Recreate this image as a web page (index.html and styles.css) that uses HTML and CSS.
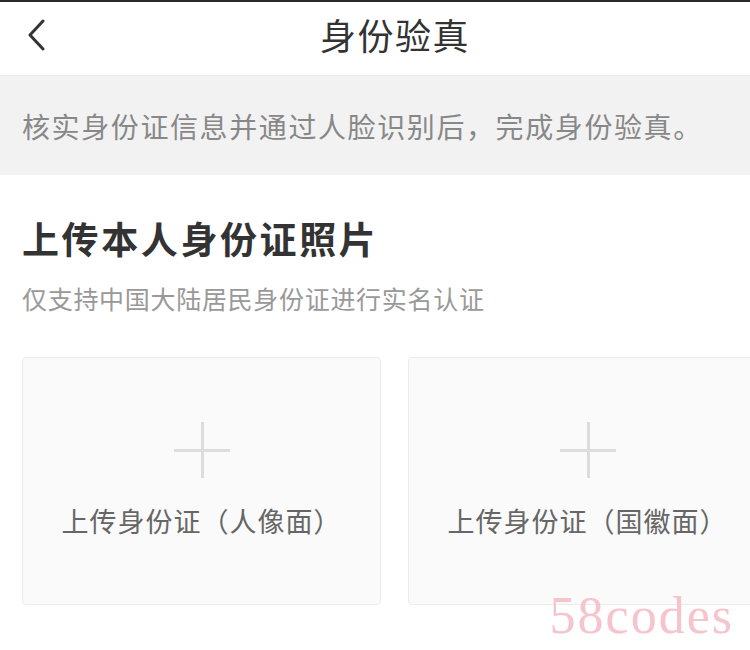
FILE: index.html
```html
<!DOCTYPE html>
<html lang="zh-CN">
  <head>
    <meta charset="UTF-8" />
    <meta name="viewport" content="width=device-width, initial-scale=1.0" />
    <title>身份验真</title>
    <link rel="stylesheet" href="styles.css">
  </head>
  <body>
    <header class="nav">
      <a class="nav-back" href="#" aria-label="返回">
        <svg width="20" height="32" viewBox="0 0 20 32">
          <path d="M17 2 L4 16 L17 30" fill="none" stroke="#333" stroke-width="3" stroke-linecap="round" stroke-linejoin="round" />
        </svg>
      </a>
      <h1 class="nav-title">身份验真</h1>
    </header>

    <div class="notice">核实身份证信息并通过人脸识别后，完成身份验真。</div>

    <section class="upload">
      <h2 class="upload-title">上传本人身份证照片</h2>
      <p class="upload-desc">仅支持中国大陆居民身份证进行实名认证</p>

      <div class="cards">
        <div class="card">
          <span class="plus"></span>
          <span class="card-label">上传身份证（人像面）</span>
        </div>
        <div class="card">
          <span class="plus"></span>
          <span class="card-label">上传身份证（国徽面）</span>
        </div>
      </div>
    </section>

    <div class="watermark">58codes</div>
  </body>
</html>
```

FILE: styles.css
```css
* {
  margin: 0;
  padding: 0;
  box-sizing: border-box;
}

html,
body {
  overflow: hidden;
}

body {
  width: 750px;
  height: 650px;
  position: relative;
  background-color: #fff;
  border-top: 2px solid #2a2a2a;
  font-family: "Noto Sans CJK SC", "Noto Sans", sans-serif;
  color: #333;
}

.nav {
  height: 73px;
  display: flex;
  align-items: center;
  justify-content: center;
  position: relative;
  background-color: #fff;
}

.nav-back {
  position: absolute;
  left: 26px;
  top: 17px;
  display: flex;
}

.nav-title {
  font-size: 36px;
  font-weight: 400;
  letter-spacing: 1.5px;
  line-height: 40px;
  margin-left: 40px;
  margin-top: -10px;
  color: #333;
}

.notice {
  height: 100px;
  padding: 0 22px;
  display: flex;
  align-items: center;
  background-color: #f2f2f2;
  border-top: 1px solid #ebebeb;
  font-size: 28px;
  letter-spacing: 1.6px;
  color: #888;
}

.upload {
  padding: 41px 0 0 22px;
}

.upload-title {
  font-size: 37px;
  font-weight: 700;
  line-height: 44px;
  letter-spacing: 2.6px;
  color: #333;
}

.upload-desc {
  margin-top: 23px;
  font-size: 25px;
  line-height: 30px;
  letter-spacing: 0.7px;
  color: #999;
}

.cards {
  margin-top: 44px;
  display: grid;
  grid-template-columns: 359px 359px;
  gap: 27px;
}

.card {
  height: 248px;
  display: flex;
  flex-direction: column;
  align-items: center;
  background-color: #fafafa;
  border: 1px solid #ececec;
  border-radius: 4px;
}

.plus {
  width: 56px;
  height: 56px;
  margin-top: 64px;
  position: relative;
}

.plus::before,
.plus::after {
  content: "";
  position: absolute;
  background-color: #dcdcdc;
}

.plus::before {
  left: 0;
  right: 0;
  top: 27px;
  height: 3px;
}

.plus::after {
  top: 0;
  bottom: 0;
  left: 27px;
  width: 3px;
}

.card-label {
  margin-top: 27px;
  font-size: 27px;
  line-height: 32px;
  letter-spacing: 1px;
  color: #666;
}

.watermark {
  position: absolute;
  right: 16px;
  bottom: 5px;
  font-family: "Liberation Serif", serif;
  font-size: 52px;
  letter-spacing: 2px;
  color: #f6c4cc;
}
```
